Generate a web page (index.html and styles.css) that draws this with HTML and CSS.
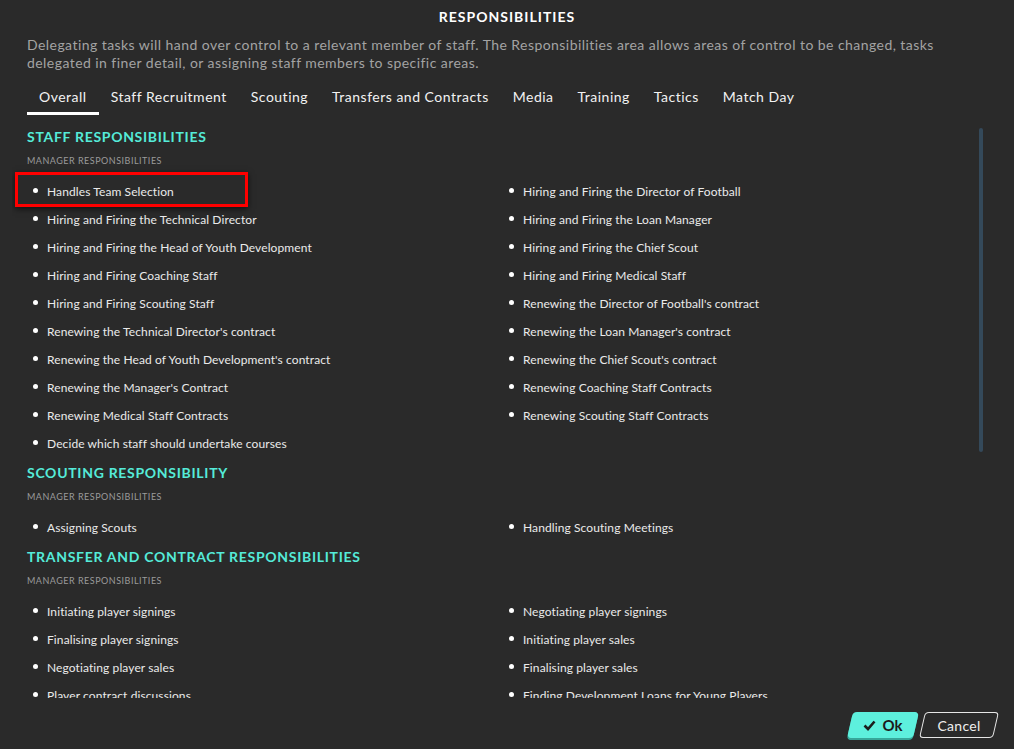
FILE: index.html
```html
<!DOCTYPE html>
<html lang="en">
<head>
    <meta charset="UTF-8">
    <meta name="viewport" content="width=device-width, initial-scale=1.0">
    <link rel="stylesheet" href="styles.css">
    <title>Responsibilities</title>
</head>

<body>
    <div class="dialog">
        <h1 class="title">RESPONSIBILITIES</h1>
        <p class="desc">Delegating tasks will hand over control to a relevant member of staff. The Responsibilities area allows areas of control to be changed, tasks delegated in finer detail, or assigning staff members to specific areas.</p>

        <nav class="tabs">
            <span class="tab active">Overall</span>
            <span class="tab">Staff Recruitment</span>
            <span class="tab">Scouting</span>
            <span class="tab">Transfers and Contracts</span>
            <span class="tab">Media</span>
            <span class="tab">Training</span>
            <span class="tab">Tactics</span>
            <span class="tab">Match Day</span>
        </nav>

        <div class="content">
            <div class="scrollbar"></div>

            <section class="group">
                <h2>STAFF RESPONSIBILITIES</h2>
                <h3>MANAGER RESPONSIBILITIES</h3>
                <ul class="items">
                    <li class="highlight">Handles Team Selection</li>
                    <li>Hiring and Firing the Director of Football</li>
                    <li>Hiring and Firing the Technical Director</li>
                    <li>Hiring and Firing the Loan Manager</li>
                    <li>Hiring and Firing the Head of Youth Development</li>
                    <li>Hiring and Firing the Chief Scout</li>
                    <li>Hiring and Firing Coaching Staff</li>
                    <li>Hiring and Firing Medical Staff</li>
                    <li>Hiring and Firing Scouting Staff</li>
                    <li>Renewing the Director of Football's contract</li>
                    <li>Renewing the Technical Director's contract</li>
                    <li>Renewing the Loan Manager's contract</li>
                    <li>Renewing the Head of Youth Development's contract</li>
                    <li>Renewing the Chief Scout's contract</li>
                    <li>Renewing the Manager's Contract</li>
                    <li>Renewing Coaching Staff Contracts</li>
                    <li>Renewing Medical Staff Contracts</li>
                    <li>Renewing Scouting Staff Contracts</li>
                    <li>Decide which staff should undertake courses</li>
                </ul>
            </section>

            <section class="group">
                <h2>SCOUTING RESPONSIBILITY</h2>
                <h3>MANAGER RESPONSIBILITIES</h3>
                <ul class="items">
                    <li>Assigning Scouts</li>
                    <li>Handling Scouting Meetings</li>
                </ul>
            </section>

            <section class="group">
                <h2>TRANSFER AND CONTRACT RESPONSIBILITIES</h2>
                <h3>MANAGER RESPONSIBILITIES</h3>
                <ul class="items">
                    <li>Initiating player signings</li>
                    <li>Negotiating player signings</li>
                    <li>Finalising player signings</li>
                    <li>Initiating player sales</li>
                    <li>Negotiating player sales</li>
                    <li>Finalising player sales</li>
                    <li>Player contract discussions</li>
                    <li>Finding Development Loans for Young Players</li>
                </ul>
            </section>
        </div>

        <div class="actions">
            <button type="button" class="btn btn-ok">
                <svg width="13" height="11" viewBox="0 0 13 11"><path d="M1.5 5.5 L5 9 L11.5 1.5" fill="none" stroke="#1c1c1c" stroke-width="2.6"/></svg>
                <span>Ok</span>
            </button>
            <button type="button" class="btn btn-cancel"><span>Cancel</span></button>
        </div>
    </div>
</body>

</html>
```

FILE: styles.css
```css
body {
    margin: 0;
    padding: 0;
    background-color: #2a2a2a;
    font-family: Lato, "Noto Sans", sans-serif;
    color: #ececec;
}

.dialog {
    height: 749px;
    padding: 0 27px;
    box-sizing: border-box;
    overflow: hidden;
}

.title {
    margin: 0;
    padding-top: 8px;
    text-align: center;
    font-size: 14px;
    line-height: 18px;
    font-weight: 700;
    letter-spacing: 1px;
    color: #ffffff;
}

.desc {
    margin: 10px 0 0;
    font-size: 14px;
    line-height: 18px;
    letter-spacing: 0.44px;
    color: #a3a3a3;
}

.tabs {
    display: flex;
    margin-top: 16px;
}

.tab {
    padding: 0 12px 6px;
    font-size: 14px;
    line-height: 18px;
    letter-spacing: 0.5px;
    color: #f2f2f2;
    border-bottom: 3px solid transparent;
}

.tab.active {
    border-bottom-color: #ffffff;
}

.content {
    position: relative;
    margin: 13px 0 0 -15px;
    padding-left: 15px;
    height: 570px;
    overflow: hidden;
}

.scrollbar {
    position: absolute;
    right: 4px;
    top: 0;
    width: 4px;
    height: 324px;
    border-radius: 2px;
    background-color: #34495a;
}

.group h2 {
    margin: 0;
    font-size: 14px;
    line-height: 18px;
    font-weight: 700;
    letter-spacing: 0.7px;
    color: #55ebd9;
}

.group h3 {
    margin: 8px 0 9px;
    font-size: 9px;
    line-height: 14px;
    font-weight: 400;
    letter-spacing: 0.5px;
    color: #9a9a9a;
}

.group + .group {
    margin-top: 7px;
}

.items {
    list-style: none;
    margin: 0;
    padding: 0;
    display: grid;
    grid-template-columns: 476px 476px;
    grid-auto-rows: 28px;
}

.items li {
    position: relative;
    display: flex;
    align-items: center;
    padding-left: 20px;
    font-size: 12px;
    letter-spacing: 0.1px;
    color: #eaeaea;
}

.items li::before {
    content: "";
    position: absolute;
    left: 6px;
    top: 11px;
    width: 5px;
    height: 5px;
    border-radius: 50%;
    background-color: #ffffff;
}

.items li.highlight::after {
    content: "";
    position: absolute;
    left: -12px;
    top: -5px;
    width: 233px;
    height: 35px;
    box-sizing: border-box;
    border: 3px solid #ff0000;
    box-shadow: 0 2px 6px rgba(0, 0, 0, 0.6);
}

.actions {
    display: flex;
    justify-content: flex-end;
    gap: 6px;
    margin: 14px -9px 0 0;
}

.btn {
    position: relative;
    height: 26px;
    padding: 0;
    border: none;
    background: none;
    font-family: inherit;
    cursor: pointer;
    display: flex;
    align-items: center;
    justify-content: center;
}

.btn::before {
    content: "";
    position: absolute;
    inset: 0;
    border-radius: 4px;
    transform: skewX(-13deg);
}

.btn svg,
.btn span {
    position: relative;
}

.btn-ok {
    width: 66px;
    gap: 6px;
    font-size: 15px;
    font-weight: 700;
    color: #1c1c1c;
}

.btn-ok::before {
    background-color: #5df0dd;
    box-shadow: 0 2px 0 #37a699;
}

.btn-cancel {
    width: 74px;
    font-size: 14px;
    letter-spacing: 0.3px;
    color: #eeeeee;
}

.btn-cancel::before {
    border: 1.5px solid #e6e6e6;
}
```
